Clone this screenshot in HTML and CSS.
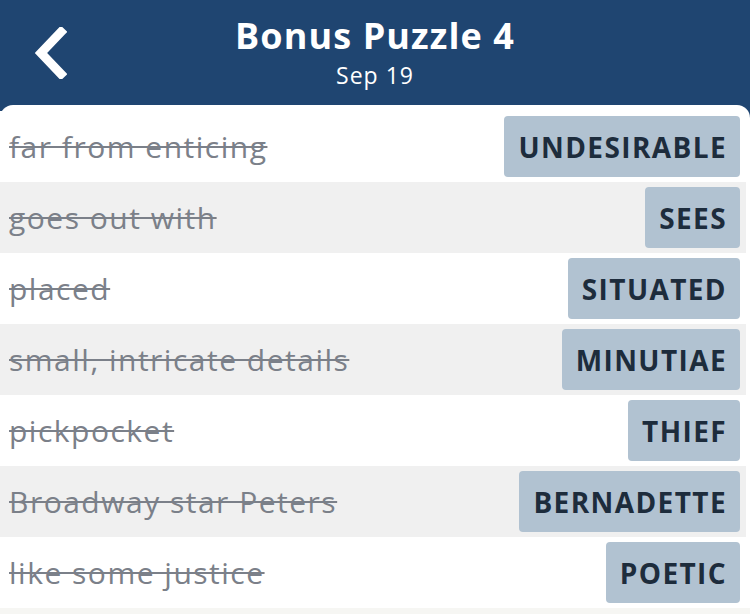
FILE: index.html
```html
<!DOCTYPE html>
<html>
<head>
<meta charset="utf-8">
<link rel="stylesheet" href="styles.css">
</head>
<body>
<div class="app">
  <header class="topbar">
    <button class="back" aria-label="Back">
      <svg width="34" height="52" viewBox="0 0 34 52"><path d="M28 5 L8 26 L28 47" fill="none" stroke="#fff" stroke-width="9" stroke-linecap="square" stroke-linejoin="miter"/></svg>
    </button>
    <div class="titles">
      <h1 class="title">Bonus Puzzle 4</h1>
      <div class="subtitle">Sep 19</div>
    </div>
  </header>
  <main class="panel">
    <ul class="list">
      <li class="row"><span class="clue">far from enticing</span><span class="answer">UNDESIRABLE</span></li>
      <li class="row alt"><span class="clue">goes out with</span><span class="answer">SEES</span></li>
      <li class="row"><span class="clue">placed</span><span class="answer">SITUATED</span></li>
      <li class="row alt"><span class="clue">small, intricate details</span><span class="answer">MINUTIAE</span></li>
      <li class="row"><span class="clue">pickpocket</span><span class="answer">THIEF</span></li>
      <li class="row alt"><span class="clue">Broadway star Peters</span><span class="answer">BERNADETTE</span></li>
      <li class="row"><span class="clue">like some justice</span><span class="answer">POETIC</span></li>
    </ul>
    <div class="footer-strip"></div>
  </main>
</div>
</body>
</html>
```

FILE: styles.css
```css
* { box-sizing: border-box; }
html, body { margin: 0; padding: 0; }
body {
  background: #1f4571;
  font-family: "Open Sans", "Noto Sans", sans-serif;
  width: 750px;
  height: 614px;
  overflow: hidden;
}
.app { display: flex; flex-direction: column; height: 614px; }
.topbar {
  height: 105px;
  background: #1f4571;
  display: flex;
  align-items: center;
  justify-content: center;
  position: relative;
  color: #fff;
}
.back {
  position: absolute;
  left: 33px;
  top: 27px;
  background: none;
  border: 0;
  padding: 0;
  width: 34px;
  height: 52px;
}
.titles { display: flex; flex-direction: column; align-items: center; margin-top: -4px; }
.title {
  margin: 0;
  font-size: 36px;
  font-weight: 700;
  line-height: 44px;
  letter-spacing: 1.1px;
}
.subtitle {
  font-size: 23px;
  line-height: 26px;
  margin-top: 4px;
  letter-spacing: 1px;
}
.panel {
  flex: 1;
  background: #fff;
  border-radius: 13px 13px 0 0;
  padding-top: 6px;
  display: flex;
  flex-direction: column;
}
.list { list-style: none; margin: 0; padding: 0; }
.row {
  height: 71px;
  width: 746px;
  display: flex;
  align-items: center;
  justify-content: space-between;
  padding: 5px 6px 5px 9px;
  background: #fff;
}
.row.alt { background: #f0f0f0; }
.clue {
  font-size: 30px;
  color: #7b8089;
  text-decoration: line-through;
  text-decoration-thickness: 2px;
  letter-spacing: 1.5px;
}
.answer {
  height: 61px;
  display: flex;
  align-items: center;
  padding: 0 13px 0 14px;
  background: #b1c2d1;
  border-radius: 4px;
  font-size: 28px;
  font-weight: 700;
  color: #1d2c3c;
  letter-spacing: 1.4px;
}
.footer-strip { flex: 1; background: #f6f6f3; }
```
